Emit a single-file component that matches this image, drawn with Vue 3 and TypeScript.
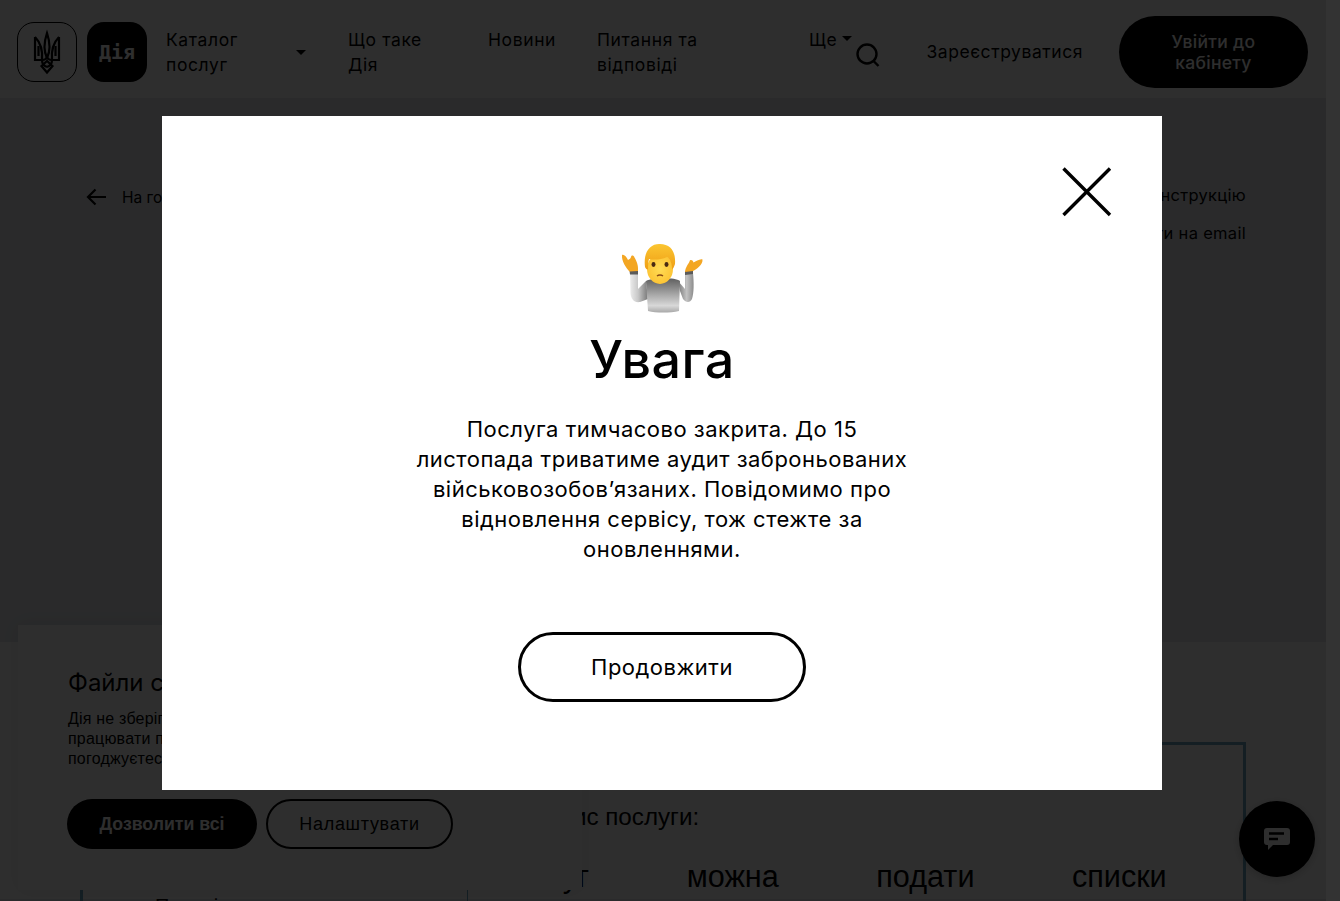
<script setup lang="ts">
interface NavItem {
  lines: string[]
  width: number
  caret?: boolean
}

const navItems: NavItem[] = [
  { lines: ['Каталог', 'послуг'], width: 182, caret: true },
  { lines: ['Що таке', 'Дія'], width: 140 },
  { lines: ['Новини'], width: 109 },
  { lines: ['Питання та', 'відповіді'], width: 212 },
]

const noticeLines = [
  'Послуга тимчасово закрита. До 15',
  'листопада триватиме аудит заброньованих',
  'військовозобов’язаних. Повідомимо про',
  'відновлення сервісу, тож стежте за',
  'оновленнями.',
]
</script>

<template>
  <div class="page">
    <header class="top">
      <div class="logos">
        <div class="logo logo-line">
          <svg width="60" height="60" viewBox="0 0 60 60" fill="none" stroke="#000" stroke-width="2.2">
            <path d="M18 15V38H25" />
            <path d="M42 15V38H35" />
            <path d="M18 15C23 20 26 27 25 38C25 42 27 44 30 45" />
            <path d="M42 15C37 20 34 27 35 38C35 42 33 44 30 45" />
            <path d="M21.5 24V34M38.5 24V34" />
            <path d="M30 11C27 20 26 28 30 36C34 28 33 20 30 11Z" />
            <path d="M25 38C28 38 30 36 30 34C30 36 32 38 35 38" />
            <path d="M30 39L24.5 44L30 50.5L35.5 44Z" />
          </svg>
        </div>
        <div class="logo logo-dark">Дія</div>
      </div>
      <nav class="nav">
        <a v-for="item in navItems" :key="item.lines[0]" class="nav-item" :style="{ width: `${item.width}px` }">
          <span>
            <span v-for="line in item.lines" :key="line" class="nav-line">{{ line }}</span>
          </span>
          <i v-if="item.caret" class="caret caret-big" />
        </a>
        <a class="nav-more">Ще<i class="caret" /></a>
      </nav>
      <svg class="search" width="26" height="26" viewBox="0 0 26 26" fill="none" stroke="#000" stroke-width="2.4">
        <circle cx="12" cy="12" r="9.5" />
        <path d="M18.5 19L23.5 24" />
      </svg>
      <a class="register">Зареєструватися</a>
      <a class="login">Увійти до<br>кабінету</a>
    </header>

    <main class="intro">
      <a class="back">
        <svg width="20" height="18" viewBox="0 0 20 18" fill="none" stroke="#000" stroke-width="2.2">
          <path d="M20 9H2M9.5 1.5L2 9L9.5 16.5" />
        </svg>
        На головну
      </a>
      <div class="actions">
        <a>Завантажити інструкцію</a>
        <a>Надіслати на email</a>
      </div>
    </main>

    <section class="service">
      <div class="frame">
        <div class="frame-left">Перелік</div>
        <div class="frame-right">
          <p class="service-label">Опис послуги:</p>
          <p class="service-lead">послуг можна подати списки</p>
        </div>
      </div>
    </section>

    <aside class="cookies">
      <h3>Файли cookie</h3>
      <p>
        Дія не зберігає ваші персональні дані, але файли cookie<br>
        працювати послугам швидше. Залишаючись на сайті, ви<br>
        погоджуєтесь на їх використання
      </p>
      <div class="cookie-buttons">
        <button class="btn-dark">Дозволити всі</button>
        <button class="btn-line">Налаштувати</button>
      </div>
    </aside>

    <div class="chat">
      <svg width="26" height="22" viewBox="0 0 26 22">
        <path d="M3 0H23A3 3 0 0 1 26 3V14A3 3 0 0 1 23 17H9L4 22V17H3A3 3 0 0 1 0 14V3A3 3 0 0 1 3 0Z" fill="#fff" />
        <path d="M5 5.5H20M5 11H14" stroke="#000" stroke-width="2.4" />
      </svg>
    </div>
  </div>

  <div class="overlay">
    <div class="modal">
      <svg class="close" width="50" height="50" viewBox="0 0 50 50" stroke="#000" stroke-width="3.4">
        <path d="M1.5 1.5L48 48M48 1.5L1.5 48" />
      </svg>
      <svg class="emoji" width="84" height="74" viewBox="0 0 84 74">
        <defs>
          <linearGradient id="shirt" x1="0" y1="0" x2="0" y2="1">
            <stop offset="0" stop-color="#5f5f5f" />
            <stop offset="0.4" stop-color="#9c9c9c" />
            <stop offset="0.8" stop-color="#d8d8d8" />
            <stop offset="1" stop-color="#a8a8a8" />
          </linearGradient>
          <linearGradient id="sleeve-left" x1="0" y1="0" x2="1" y2="0">
            <stop offset="0" stop-color="#ececec" />
            <stop offset="0.45" stop-color="#c8c8c8" />
            <stop offset="1" stop-color="#777" />
          </linearGradient>
          <linearGradient id="sleeve-right" x1="0" y1="0" x2="1" y2="0">
            <stop offset="0" stop-color="#777" />
            <stop offset="0.55" stop-color="#c2c2c2" />
            <stop offset="1" stop-color="#8c8c8c" />
          </linearGradient>
          <radialGradient id="skin" cx="0.5" cy="0.5" r="0.6">
            <stop offset="0" stop-color="#ffdc55" />
            <stop offset="1" stop-color="#fcc02f" />
          </radialGradient>
          <linearGradient id="hair" x1="0" y1="0" x2="0" y2="1">
            <stop offset="0" stop-color="#fbc531" />
            <stop offset="1" stop-color="#ef9f16" />
          </linearGradient>
        </defs>
        <path d="M10 32L18 32L18 48L26 40L28 58L20 61C14 62 11 58 10.5 52Z" fill="url(#sleeve-left)" />
        <path d="M65 32L73 32C74 42 74 52 72 58C70 62 66 62 63 58L60 50L58 40L65 48Z" fill="url(#sleeve-right)" />
        <path d="M26 40C32 37 54 36 60 40L59 70C50 72 36 72 28 70Z" fill="url(#shirt)" />
        <path d="M9.5 29.5L18 29.5L18 33.5L10 33.5ZM65 30L73 29L73 33L65 34Z" fill="#5a5a5a" />
        <path d="M2 14C4 13 6.5 16 8 19C9 18 10.5 18 11 16C11.5 14 13.5 14 14.5 16.5C16.5 20 18.5 24 18 30L9.5 30.5C6 26.5 1.5 20.5 2 14Z" fill="#f3a623" />
        <path d="M82.5 18.5C80 17.5 76 20.5 73.5 21.5C72.5 18.5 70 18.5 69.5 20.5C68.5 23 65.5 26 65 31L73 30C76.5 28 83 24 82.5 18.5Z" fill="#f3a623" />
        <ellipse cx="40" cy="28" rx="13" ry="15" fill="url(#skin)" />
        <path d="M25 26C23 10 31 2.5 40 3C50 3 56 10 55 23C54 26 53 28 52 28C52 22 50 18 47 16C41 19 33 19 29 18C28 21 28 25 28 28C27 29 26 28 25 26Z" fill="url(#hair)" />
        <ellipse cx="33.5" cy="23.5" rx="2" ry="2.4" fill="#4a2b12" />
        <ellipse cx="46.5" cy="23.5" rx="2" ry="2.4" fill="#4a2b12" />
        <path d="M37 35C38.5 33.8 41.5 33.8 43 35" stroke="#8a4a14" stroke-width="1.5" fill="none" />
      </svg>
      <h1>Увага</h1>
      <p class="notice">
        <template v-for="line in noticeLines" :key="line">{{ line }}<br></template>
      </p>
      <button class="continue">Продовжити</button>
    </div>
  </div>

  <div class="scrollbar" />
</template>

<style>
html, body {
  overflow: hidden;
}
</style>

<style scoped>
.page {
  width: 1326px;
  height: 901px;
  overflow: hidden;
  position: relative;
  color: #000;
  font-family: Inter, "Noto Sans", sans-serif;
  background: #e6e9ee;
}
a {
  color: #000;
}
.top {
  height: 98px;
  box-sizing: border-box;
  display: flex;
  align-items: flex-start;
  padding: 16px 18px 0 17px;
  background: #fff;
}
.logos {
  display: flex;
  gap: 10px;
  margin-top: 6px;
}
.logo {
  width: 60px;
  height: 60px;
  box-sizing: border-box;
  border-radius: 17px;
  display: flex;
  align-items: center;
  justify-content: center;
}
.logo-line {
  border: 1px solid #000;
}
.logo-line svg {
  margin: -1px;
  flex: none;
}
.logo-dark {
  background: #000;
  color: #fff;
  font-family: "DejaVu Sans Mono", monospace;
  font-weight: 700;
  font-size: 20px;
}
.nav {
  display: flex;
  margin-left: 19px;
  padding-top: 11px;
  font-size: 17.5px;
  line-height: 25px;
  letter-spacing: 0.6px;
}
.nav-item {
  display: flex;
  align-items: center;
  justify-content: space-between;
  box-sizing: border-box;
  padding-right: 42px;
  align-self: flex-start;
}
.nav-line {
  display: block;
}
.nav-more {
  display: flex;
  align-items: center;
  align-self: flex-start;
  gap: 5px;
  height: 25px;
}
.caret {
  display: block;
  width: 0;
  height: 0;
  border-left: 5px solid transparent;
  border-right: 5px solid transparent;
  border-top: 5px solid #000;
  margin-top: -3px;
}
.caret-big {
  border-left-width: 5.5px;
  border-right-width: 5.5px;
  margin-top: 0;
}
.search {
  margin: 26px 0 0 3px;
  flex: none;
}
.register {
  margin: 24px 0 0 45px;
  font-size: 17.5px;
  line-height: 24px;
  letter-spacing: 0.55px;
}
.login {
  margin-left: 36px;
  width: 189px;
  height: 72px;
  border-radius: 36px;
  background: #000;
  color: #fff;
  display: flex;
  align-items: center;
  justify-content: center;
  text-align: center;
  font-weight: 500;
  font-size: 17.5px;
  line-height: 21px;
  letter-spacing: 0.3px;
}
.intro {
  height: 544px;
  box-sizing: border-box;
  display: flex;
  justify-content: space-between;
  padding: 87px 80px 0 86px;
  font-size: 15.5px;
}
.back {
  display: flex;
  align-items: center;
  gap: 16px;
  height: 24px;
}
.actions {
  display: flex;
  flex-direction: column;
  align-items: flex-end;
  gap: 19px;
  margin-top: 1px;
  font-size: 16.5px;
  line-height: 19px;
  letter-spacing: 0.3px;
}
.service {
  height: 257px;
  box-sizing: border-box;
  padding: 100px 80px 0;
  background: #fff;
  font-family: "Liberation Sans", Arial, sans-serif;
}
.frame {
  height: 300px;
  box-sizing: border-box;
  border: 3px solid #6ea8c4;
  display: grid;
  grid-template-columns: 385px 1fr;
}
.frame-left {
  border-right: 1px solid #6ea8c4;
  padding: 150px 0 0 72px;
  font-size: 20px;
}
.frame-right {
  padding: 59px 10px 0 10px;
}
.service-label {
  margin: 0 0 0 63px;
  font-size: 24.2px;
  line-height: 26px;
}
.service-lead {
  margin: 29px 0 0 18px;
  font-size: 30.6px;
  line-height: 34px;
  word-spacing: 89px;
  white-space: nowrap;
}
.cookies {
  position: absolute;
  left: 18px;
  top: 625px;
  width: 564px;
  height: 265px;
  box-sizing: border-box;
  padding: 43px 0 0 50px;
  background: #fff;
  box-shadow: 0 0 20px rgba(0, 0, 0, 0.08);
  font-family: "Liberation Sans", Arial, sans-serif;
}
.cookies h3 {
  margin: 0;
  font-weight: 400;
  font-size: 24px;
  line-height: 30px;
  font-family: Inter, sans-serif;
}
.cookies p {
  margin: 11px 0 0;
  font-size: 16px;
  line-height: 20px;
  letter-spacing: 0.2px;
  white-space: nowrap;
}
.cookie-buttons {
  display: flex;
  gap: 9px;
  margin: 30px 0 0 -1px;
}
.cookie-buttons button {
  height: 50px;
  border-radius: 25px;
  font-family: inherit;
}
.btn-dark {
  width: 190px;
  background: #000;
  color: #fff;
  border: none;
  font-weight: 700;
  font-size: 17.7px;
}
.btn-line {
  width: 187px;
  background: #fff;
  color: #000;
  border: 2px solid #000;
  font-size: 18px;
  letter-spacing: 0.7px;
}
.chat {
  position: absolute;
  left: 1239px;
  top: 801px;
  width: 76px;
  height: 76px;
  border-radius: 50%;
  background: #000;
  box-shadow: 0 2px 10px rgba(0, 0, 0, 0.2);
  display: flex;
  align-items: center;
  justify-content: center;
}
.overlay {
  position: fixed;
  inset: 0;
  box-sizing: border-box;
  background: rgba(0, 0, 0, 0.82);
  padding: 116px 16px 0 0;
  display: flex;
  justify-content: center;
  align-items: flex-start;
  font-family: Inter, "Noto Sans", sans-serif;
}
.modal {
  position: relative;
  width: 1000px;
  height: 674px;
  box-sizing: border-box;
  padding-top: 125px;
  background: #fff;
  color: #000;
  display: flex;
  flex-direction: column;
  align-items: center;
}
.close {
  position: absolute;
  left: 900px;
  top: 51px;
}
.emoji {
  display: block;
  filter: blur(0.4px);
}
.modal h1 {
  margin: 14px 0 0;
  font-weight: 500;
  font-size: 52px;
  line-height: 62px;
  letter-spacing: 0.5px;
}
.notice {
  margin: 23px 0 0;
  text-align: center;
  font-size: 22px;
  line-height: 30px;
  letter-spacing: 0.5px;
}
.continue {
  margin-top: 68px;
  width: 288px;
  height: 70px;
  border-radius: 35px;
  border: 3px solid #000;
  background: #fff;
  color: #000;
  font-family: inherit;
  font-size: 22px;
  letter-spacing: 0.5px;
}
.scrollbar {
  position: fixed;
  right: 0;
  top: 0;
  bottom: 0;
  width: 14px;
  background: #333;
}
</style>
